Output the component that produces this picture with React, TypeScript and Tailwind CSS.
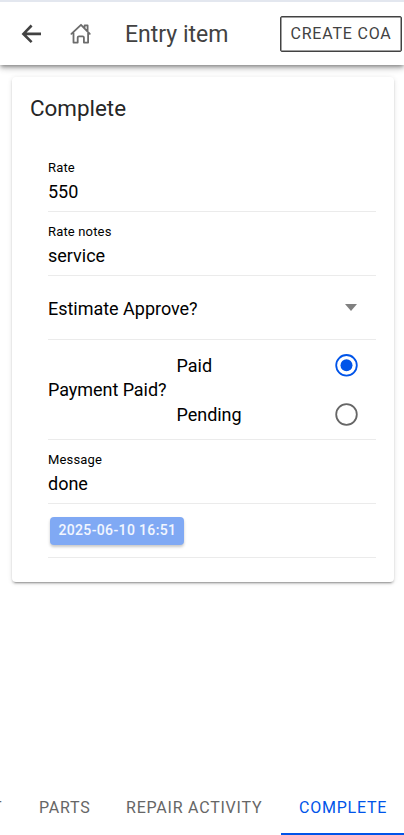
import React from "react";

function BackArrow() {
  return (
    <svg className="block" width="20" height="20" viewBox="0 0 20 20" fill="none" stroke="#424242" strokeWidth="2.6">
      <path d="M10.6 1.5 2.4 9.9 10.6 18.2M2.4 9.9H20" />
    </svg>
  );
}

function HomeIcon() {
  return (
    <svg className="block" width="22" height="22" viewBox="0 0 22 22" fill="none" stroke="#6c6c6c" strokeWidth="1.8" strokeLinejoin="round" strokeLinecap="round">
      <path d="M1.4 10.8 11 1.8l8.8 9M14.6 4.3V2.4H17.6v5.4M3.5 10.2V19.6h4.2v-5q0-1.3 1.3-1.3h3.6q1.3 0 1.3 1.3v5h4.2V10.2" />
    </svg>
  );
}

function Field({ label, value, className }: { label: string; value: string; className: string }) {
  return (
    <div className={`border-b border-[#ebebeb] ${className}`}>
      <div className="pt-[11px] text-[13px] leading-[18px] tracking-[0.16px]">{label}</div>
      <div className="text-[18px] leading-[30px]">{value}</div>
    </div>
  );
}

export default function App() {
  return (
    <div className="flex h-[835px] w-[404px] flex-col overflow-hidden bg-white font-['Roboto',sans-serif] text-black">
      <header className="flex h-[65px] shrink-0 items-center border-t-2 border-[#e3e7ef] pl-[21px] shadow-[0_2px_4px_-1px_rgba(0,0,0,0.4),0_4px_5px_0_rgba(0,0,0,0.14),0_1px_10px_0_rgba(0,0,0,0.12)]">
        <BackArrow />
        <div className="ml-[29px]"><HomeIcon /></div>
        <h1 className="ml-[33px] w-[155px] pt-[2px] text-[23px] leading-[30px] text-[#424242]">Entry item</h1>
        <button className="h-[36px] w-[122px] shrink-0 whitespace-nowrap rounded-[2px] border-[1.5px] border-[#424242] text-[16px] tracking-[0.8px] text-[#424242] shadow-[inset_0_0_0_0.5px_#424242]">CREATE COA</button>
      </header>
      <main className="ml-[12px] mr-[10px] mt-[12px] h-[505px] rounded-[4px] pl-[36px] pr-[18px] shadow-[0_3px_1px_-2px_rgba(0,0,0,0.2),0_2px_2px_0_rgba(0,0,0,0.14),0_1px_5px_0_rgba(0,0,0,0.12)]">
        <h2 className="-ml-[18px] h-[71px] pt-[15px] text-[22.4px] leading-[32px] text-[#262626]">Complete</h2>
        <Field label="Rate" value="550" className="h-[64px]" />
        <Field label="Rate notes" value="service" className="h-[64px]" />
        <div className="flex h-[64px] items-center justify-between border-b border-[#ebebeb] pr-[19px] pt-[2px] text-[18px] tracking-[-0.02px]">
          <span>Estimate Approve?</span>
          <span className="-mt-[2px] border-x-[6px] border-t-[7px] border-x-transparent border-t-[#808080]" />
        </div>
        <div className="flex h-[100px] items-center border-b border-[#ebebeb] pr-[18px] text-[18px]">
          <span className="w-[128.5px] tracking-[-0.05px]">Payment Paid?</span>
          <div className="grow">
            <div className="flex h-[49px] items-center justify-between">
              <span>Paid</span>
              <svg className="block" width="23" height="23" viewBox="0 0 23 23">
                <circle cx="11.5" cy="11.3" r="10.3" fill="none" stroke="#0054e9" strokeWidth="1.8" />
                <circle cx="11.5" cy="11.3" r="6" fill="#0054e9" />
              </svg>
            </div>
            <div className="flex h-[49px] items-center justify-between">
              <span className="tracking-[-0.03px]">Pending</span>
              <svg className="block" width="23" height="23" viewBox="0 0 23 23">
                <circle cx="11.5" cy="11.5" r="10.3" fill="none" stroke="#666" strokeWidth="1.8" />
              </svg>
            </div>
          </div>
        </div>
        <Field label="Message" value="done" className="h-[64px]" />
        <div className="flex h-[54px] items-center border-b border-[#ebebeb] pl-[2.4px]">
          <button className="h-[28px] w-[134px] rounded-[4px] bg-[#80a9f4] text-[14px] font-medium tracking-[0.36px] text-white/90 shadow-[0_2px_3px_rgba(0,0,0,0.22)]">2025-06-10 16:51</button>
        </div>
      </main>
      <nav className="mt-auto flex h-[55px] whitespace-nowrap text-[16px] leading-[55px] tracking-[0.78px] text-[#666]">
        <span className="flex w-[39px] justify-start"><span className="-ml-[8px]">T</span></span>
        <span className="w-[87px]">PARTS</span>
        <span className="w-[155px]">REPAIR ACTIVITY</span>
        <span className="grow border-b-2 border-[#0054e9] pl-[18px] text-[#0054e9]">COMPLETE</span>
      </nav>
    </div>
  );
}
